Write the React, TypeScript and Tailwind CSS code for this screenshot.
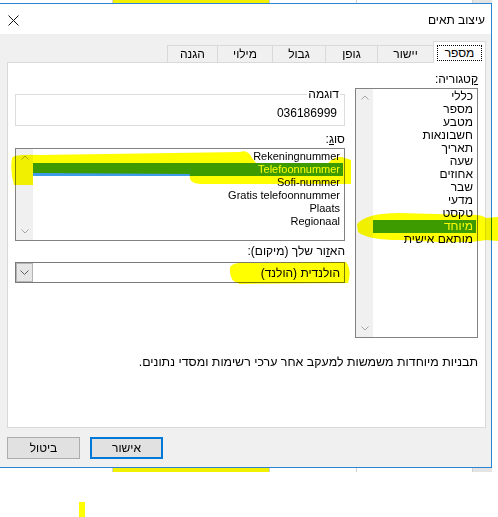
import React from 'react';

const categories = [
  'כללי',
  'מספר',
  'מטבע',
  'חשבונאות',
  'תאריך',
  'שעה',
  'אחוזים',
  'שבר',
  'מדעי',
  'טקסט',
  'מיוחד',
  'מותאם אישית',
];

const types = [
  'Rekeningnummer',
  'Telefoonnummer',
  'Sofi-nummer',
  'Gratis telefoonnummer',
  'Plaats',
  'Regionaal',
];

const tabs = [
  { label: 'מספר', width: 'w-[53px]', active: true },
  { label: 'יישור', width: 'w-[56px]' },
  { label: 'גופן', width: 'w-[52px]' },
  { label: 'גבול', width: 'w-[53px]' },
  { label: 'מילוי', width: 'w-[55px]' },
  { label: 'הגנה', width: 'w-[50px]' },
];

function Chevron({ up }: { up?: boolean }) {
  return (
    <svg width="8" height="5" viewBox="0 0 8 5" fill="none">
      <path d={up ? 'M0.5 4.5L4 1L7.5 4.5' : 'M0.5 0.5L4 4L7.5 0.5'} stroke="#a6a6a6" />
    </svg>
  );
}

function ScrollBar() {
  return (
    <div className="w-[17px] shrink-0 bg-[#f0f0f0] flex flex-col items-center justify-between py-[6px]">
      <Chevron up />
      <Chevron />
    </div>
  );
}

interface ListBoxProps {
  items: string[];
  selected: string;
  height: string;
  latin?: boolean;
}

function ListBox({ items, selected, height, latin }: ListBoxProps) {
  return (
    <div className={`flex border border-[#828282] bg-white ${height}`}>
      <div className={`flex-1 pt-px ${latin ? 'text-[11px]' : 'text-[12px]'}`}>
        {items.map((item) => (
          <div
            key={item}
            className={`h-[13px] leading-[13px] pr-[3px] mr-px whitespace-nowrap ${
              item === selected ? 'bg-[#3d9be9] text-white' : ''
            }`}
          >
            {item}
          </div>
        ))}
      </div>
      <ScrollBar />
    </div>
  );
}

function GridStrip({ height }: { height: string }) {
  return (
    <div className={`flex ${height}`}>
      <div className="w-[113px] border-r border-[#d0d0d0]" />
      <div className="w-[157px] bg-[#f0f000] border-r border-[#d0d0d0]" />
      <div className="w-[87px] border-r border-[#d0d0d0]" />
      <div className="w-[116px] border-r border-[#d0d0d0]" />
      <div className="w-[19px] bg-[#e4e4e4]" />
      <div className="flex-1" />
    </div>
  );
}

export default function App() {
  return (
    <div className="w-[498px] h-[517px] relative overflow-hidden bg-white font-['Liberation_Sans',sans-serif] text-[12px] text-black">
      <GridStrip height="h-[3px]" />

      <div className="flex">
        <div
          dir="rtl"
          className="w-[492px] h-[465px] border border-l-0 border-[#2b84d6] bg-[#f0f0f0] flex flex-col"
        >
          {/* Title bar */}
          <div className="h-[30px] bg-white flex items-center justify-between pr-[6px] pl-[8px]">
            <span className="leading-[13px] mt-[2px]">עיצוב תאים</span>
            <svg width="11" height="11" viewBox="0 0 11 11" className="mt-[2px]">
              <path d="M0.5 0.5L10.5 10.5M10.5 0.5L0.5 10.5" stroke="#111" strokeWidth="1" />
            </svg>
          </div>

          <div className="flex-1 flex flex-col pt-[7px] pr-[5px] pl-[7px]">
            {/* Tabs */}
            <div className="flex items-end h-[21px]">
              {tabs.map((tab) =>
                tab.active ? (
                  <div
                    key={tab.label}
                    className={`${tab.width} h-[22px] -mb-px relative z-10 bg-white border-t border-l border-r border-[#d9d9d9] pt-[3px] pb-[2px] px-[3px]`}
                  >
                    <div className="h-full border border-dotted border-black flex items-center justify-center">
                      {tab.label}
                    </div>
                  </div>
                ) : (
                  <div
                    key={tab.label}
                    className={`${tab.width} h-[17px] bg-[#f0f0f0] border-t border-l border-[#d9d9d9] flex items-center justify-center`}
                  >
                    {tab.label}
                  </div>
                )
              )}
            </div>

            {/* Panel */}
            <div className="h-[366px] border border-[#d9d9d9] bg-white px-[7px] pt-[10px] flex flex-col">
              <div className="flex gap-[10px] items-start">
                {/* Category column */}
                <div className="w-[123px]">
                  <div className="h-[13px] leading-[13px]">
                    <u>ק</u>טגוריה:
                  </div>
                  <div className="mt-[2px]">
                    <ListBox items={categories} selected="מיוחד" height="h-[250px]" />
                  </div>
                </div>

                {/* Options column */}
                <div className="w-[330px]">
                  <div className="mt-[21px] relative h-[32px] border border-[#dcdcdc] flex items-end pr-[7px] pb-[5px]">
                    <span className="absolute -top-[7px] right-[4px] bg-white px-[1px] leading-[13px]">דוגמה</span>
                    <span className="leading-[13px]">036186999</span>
                  </div>

                  <div className="mt-[7px] h-[13px] leading-[13px]">
                    סו<u>ג</u>:
                  </div>
                  <div className="mt-[2px]">
                    <ListBox items={types} selected="Telefoonnummer" height="h-[93px]" latin />
                  </div>

                  <div className="mt-[4px] h-[13px] leading-[13px]">
                    הא<u>ז</u>ור שלך (מיקום):
                  </div>
                  <div className="mt-[4px] h-[21px] border border-[#7a7a7a] bg-white flex">
                    <div className="flex-1 flex items-center pr-[4px]">הולנדית (הולנד)</div>
                    <div className="w-[17px] bg-[#e6e6e6] border border-[#b4b4b4] flex items-center justify-center">
                      <svg width="9" height="5" viewBox="0 0 9 5" fill="none">
                        <path d="M0.5 0.5L4.5 4.5L8.5 0.5" stroke="#606060" />
                      </svg>
                    </div>
                  </div>
                </div>
              </div>

              <div className="mt-[18px] leading-[13px] text-[12.4px]">
                תבניות מיוחדות משמשות למעקב אחר ערכי רשימות ומסדי נתונים.
              </div>
            </div>

            {/* Buttons */}
            <div className="flex justify-end gap-[10px] mt-[9px]">
              <button className="w-[73px] h-[22px] bg-[#e1e1e1] border-2 border-[#0078d7]">אישור</button>
              <button className="w-[73px] h-[22px] bg-[#e1e1e1] border border-[#adadad]">ביטול</button>
            </div>
          </div>
        </div>
        <div className="flex-1" />
      </div>

      <GridStrip height="h-[4px]" />

      {/* Highlighter marks drawn over the screenshot */}
      <svg
        width="498"
        height="517"
        viewBox="0 0 498 517"
        className="absolute inset-0 pointer-events-none mix-blend-multiply"
      >
        <path
          fill="#ffff00"
          d="M12 158 Q14 154 40 155 L240 152 Q248 149 252 158 L256 163 L328 163 Q334 156 342 157 L351 160 L351 184 L200 184 Q188 183 190 174 L40 173 L33 173 L33 185 L14 185 Q10 172 12 158 Z"
        />
        <path
          fill="#ffff00"
          d="M357 224 Q366 213 400 213 L470 215 Q480 214 486 218 L498 217 L498 241 L486 240 Q470 243 440 242 L400 240 Q368 240 358 232 Z"
        />
        <path
          fill="#ffff00"
          d="M230 268 Q231 262 250 263 L346 262 Q352 270 348 283 L240 284 Q229 282 230 268 Z"
        />
        <rect x="79" y="502" width="6" height="15" fill="#ffff00" />
      </svg>
    </div>
  );
}
